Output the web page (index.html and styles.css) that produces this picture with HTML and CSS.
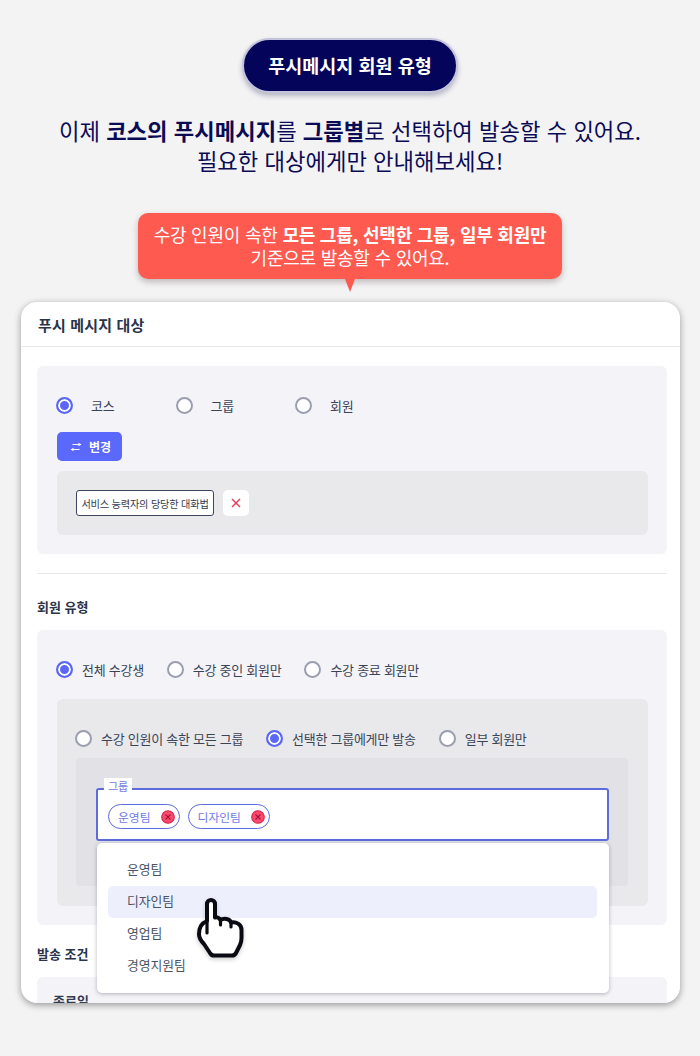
FILE: index.html
```html
<!DOCTYPE html>
<html lang="ko">
<head>
<meta charset="utf-8">
<title>푸시메시지 회원 유형</title>
<link rel="stylesheet" href="styles.css">
</head>
<body>
<div class="page">
  <div class="pill">푸시메시지 회원 유형</div>
  <p class="headline">이제 <b>코스의 푸시메시지</b>를 <b>그룹별</b>로 선택하여 발송할 수 있어요.<br>필요한 대상에게만 안내해보세요!</p>
  <div class="callout">수강 인원이 속한 <b>모든 그룹, 선택한 그룹, 일부 회원만</b><br>기준으로 발송할 수 있어요.</div>
  <div class="panel">
    <div class="panel-head">푸시 메시지 대상</div>
    <div class="panel-body">
      <div class="box box-target">
        <div class="radios radios-wide">
          <span class="radio on"><i></i>코스</span>
          <span class="radio"><i></i>그룹</span>
          <span class="radio"><i></i>회원</span>
        </div>
        <button class="change"><svg width="12" height="10" viewBox="0 0 12 10" fill="none" stroke="#fff" stroke-width="1.200"><path d="M2.500 2.500H9M9.500 7.500H3"/><path d="M8.500.8 11.500 2.500 8.500 4.200zM3.500 5.800.5 7.500 3.500 9.200z" fill="#fff" stroke="none"/></svg>변경</button>
        <div class="inner inner-course">
          <span class="course-chip">서비스 능력자의 당당한 대화법</span>
          <span class="course-x"><svg width="10" height="10" viewBox="0 0 10 10" fill="none" stroke="#e8405f" stroke-width="1.500"><path d="M1 1l8 8M9 1l-8 8"/></svg></span>
        </div>
      </div>
      <hr class="rule">
      <h3 class="sub">회원 유형</h3>
      <div class="box box-member">
        <div class="radios">
          <span class="radio on"><i></i>전체 수강생</span>
          <span class="radio"><i></i>수강 중인 회원만</span>
          <span class="radio"><i></i>수강 종료 회원만</span>
        </div>
        <div class="inner inner-scope">
          <div class="radios">
            <span class="radio"><i></i>수강 인원이 속한 모든 그룹</span>
            <span class="radio on"><i></i>선택한 그룹에게만 발송</span>
            <span class="radio"><i></i>일부 회원만</span>
          </div>
          <div class="deep">
            <div class="field">
              <span class="field-label">그룹</span>
              <span class="tag">운영팀<svg class="tag-x" width="14" height="14" viewBox="0 0 14 14"><circle cx="7" cy="7" r="6.300" fill="#fb4a6c" stroke="#d8244f" stroke-width="1.100"/><path d="M4.500 4.500l5 5M9.500 4.500l-5 5" stroke="#a5123c" stroke-width="1.100"/></svg></span>
              <span class="tag">디자인팀<svg class="tag-x" width="14" height="14" viewBox="0 0 14 14"><circle cx="7" cy="7" r="6.300" fill="#fb4a6c" stroke="#d8244f" stroke-width="1.100"/><path d="M4.500 4.500l5 5M9.500 4.500l-5 5" stroke="#a5123c" stroke-width="1.100"/></svg></span>
            </div>
          </div>
        </div>
      </div>
      <h3 class="sub sub-send">발송 조건</h3>
      <div class="box box-send"><b>종료일</b></div>
    </div>
    <ul class="menu">
      <li>운영팀</li>
      <li class="hover">디자인팀</li>
      <li>영업팀</li>
      <li>경영지원팀</li>
    </ul>
    <svg class="cursor" width="52" height="64" viewBox="0 0 52 64" fill="none">
      <path d="M12 25C7 27 4 32 4 38c0 4 2 7 5 10l6 9c1 2 2 2.500 4 2.500h18c2 0 3-.5 4-2.500l4-8c1-2 1.500-4 1.500-7v-8c0-6-5.500-8.500-10.500-7.500-1-3.500-7-5-10.500-2.500-1-2-3.500-3-5.500-2.500V8c0-5.500-8-5.500-8 0z" fill="#fff" stroke="#0a0a12" stroke-width="4" stroke-linejoin="round"/>
      <path d="M12 25v12M25.500 24v5M36 26.500v4.500" stroke="#0a0a12" stroke-width="3.200" stroke-linecap="round"/>
    </svg>
  </div>
</div>
</body>
</html>
```

FILE: styles.css
```css
* { box-sizing: border-box; }
html, body { margin: 0; padding: 0; }
body {
  width: 700px;
  height: 1056px;
  overflow: hidden;
  background: #f3f3f4;
  font-family: "Noto Sans CJK KR", "Noto Sans", sans-serif;
  color: #333c50;
}
.page {
  display: flex;
  flex-direction: column;
  align-items: center;
  padding-top: 38px;
}
.pill {
  width: 216px;
  height: 55px;
  display: flex;
  align-items: center;
  justify-content: center;
  padding-bottom: 1px;
  border-radius: 28px;
  background: #04045a;
  border: 2px solid #c3c4dc;
  box-shadow: 0 3px 5px rgba(40, 40, 90, .3);
  color: #fff;
  font-size: 18.500px;
  font-weight: 700;
}
.headline {
  margin: 22px 0 0;
  text-align: center;
  font-size: 22.250px;
  line-height: 30px;
  color: #0b0b55;
}
.headline b { font-weight: 700; }
.callout {
  position: relative;
  margin-top: 38px;
  width: 424px;
  height: 66px;
  padding-top: 10px;
  border-radius: 10px;
  background: #ff5a50;
  box-shadow: 0 3px 6px rgba(60, 30, 30, .28);
  color: #fff;
  text-align: center;
  font-size: 18px;
  line-height: 23px;
  letter-spacing: -.23px;
}
.callout b { font-weight: 700; }
.callout::after {
  content: "";
  position: absolute;
  left: 206.500px;
  top: 100%;
  border: solid transparent;
  border-width: 13px 5.500px 0;
  border-top-color: #ff5a50;
}
.panel {
  position: relative;
  align-self: flex-start;
  margin: 23px 0 0 21px;
  width: 659px;
  height: 701px;
  border-radius: 16px;
  background: #fff;
  box-shadow: 0 2px 7px rgba(0, 0, 0, .38);
  overflow: hidden;
}
.panel-head {
  height: 45px;
  padding: 0 17px;
  display: flex;
  align-items: center;
  border-bottom: 1px solid #e8e8ec;
  font-size: 15px;
  letter-spacing: .15px;
  font-weight: 700;
  color: #2b3448;
}
.panel-body { padding: 19px 13px 0 16px; }
.box {
  background: #f4f4f8;
  border-radius: 6px;
}
.box-target { height: 188px; padding: 20px 19px 20px 20px; }
.radios { display: flex; align-items: center; height: 38px; gap: 23px; margin-left: -1px; }
.radios-wide { gap: 0; }
.radios-wide .radio { width: 119.500px; gap: 18px; }
.radio {
  display: flex;
  align-items: center;
  gap: 9px;
  font-size: 13px;
  letter-spacing: -.27px;
  color: #3a4356;
}
.radio i {
  flex: none;
  width: 17px;
  height: 17px;
  border-radius: 50%;
  border: 2px solid #9a9eae;
  background: #fff;
}
.radio.on i {
  border-color: #5a68f5;
  background: #5a68f5;
  box-shadow: inset 0 0 0 2px #fff;
}
.change {
  display: flex;
  align-items: center;
  gap: 7px;
  width: 65px;
  height: 29px;
  margin-top: 8px;
  padding: 0 0 0 13px;
  border: 0;
  border-radius: 5px;
  background: #5a68fb;
  color: #fff;
  font: 700 12px "Noto Sans CJK KR", sans-serif;
}
.inner {
  background: #e9e9ec;
  border-radius: 6px;
}
.inner-course {
  display: flex;
  align-items: center;
  gap: 9px;
  height: 64px;
  margin-top: 10px;
  padding: 0 19px;
}
.course-chip {
  width: 138px;
  height: 26px;
  display: flex;
  align-items: center;
  justify-content: center;
  border: 1px solid #3d4660;
  border-radius: 3px;
  background: #fff;
  font-size: 10.200px;
  letter-spacing: -.2px;
  white-space: nowrap;
}
.course-x {
  width: 26px;
  height: 26px;
  display: flex;
  align-items: center;
  justify-content: center;
  border-radius: 5px;
  background: #fff;
}
.rule {
  margin: 19px 0 0;
  width: 630px;
  border: 0;
  border-top: 1px solid #e8e8ec;
}
.sub {
  margin: 0;
  padding-top: 23px;
  height: 56px;
  font-size: 13px;
  line-height: 19px;
  font-weight: 700;
  color: #2b3448;
}
.box-member { height: 295px; padding: 20px 19px 20px 20px; }
.inner-scope {
  height: 207px;
  margin-top: 11px;
  padding: 20px 20px 20px 19px;
}
.deep {
  height: 128px;
  margin-top: 1px;
  padding: 30px 19px 0 20px;
  background: #e1e1e6;
  border-radius: 4px;
}
.field {
  position: relative;
  display: flex;
  align-items: center;
  gap: 8px;
  width: 513px;
  height: 53px;
  padding: 4px 10px 0;
  background: #fff;
  border: 2px solid #5d6bdc;
  border-radius: 3px;
}
.field-label {
  position: absolute;
  left: 6px;
  top: -12px;
  padding: 1px 4px 0;
  background: #fff;
  font-size: 11px;
  line-height: 15px;
  color: #6f7be6;
}
.tag {
  display: flex;
  align-items: center;
  gap: 10px;
  height: 25px;
  padding: 0 4px 0 9px;
  border: 1px solid #5d6bdc;
  border-radius: 13px;
  font-size: 11.800px;
  color: #6f7be6;
  white-space: nowrap;
}
.sub-send { padding-top: 19px; height: 52px; }
.box-send {
  height: 60px;
  padding: 14px 16px;
  font-size: 13px;
  line-height: 19px;
}
.menu {
  position: absolute;
  left: 76px;
  top: 541px;
  width: 512px;
  height: 150px;
  margin: 0;
  padding: 11px 12px 11px 11px;
  list-style: none;
  border-radius: 5px;
  background: #fff;
  box-shadow: 0 1px 4px rgba(50, 50, 90, .35);
}
.menu li {
  height: 32px;
  display: flex;
  align-items: center;
  padding: 0 0 3px 19px;
  border-radius: 5px;
  font-size: 12.800px;
  color: #4a5266;
}
.menu li.hover { background: #eeeffd; }
.cursor {
  position: absolute;
  left: 174px;
  top: 594px;
  filter: drop-shadow(0 2px 2px rgba(0, 0, 0, .2));
}
```
